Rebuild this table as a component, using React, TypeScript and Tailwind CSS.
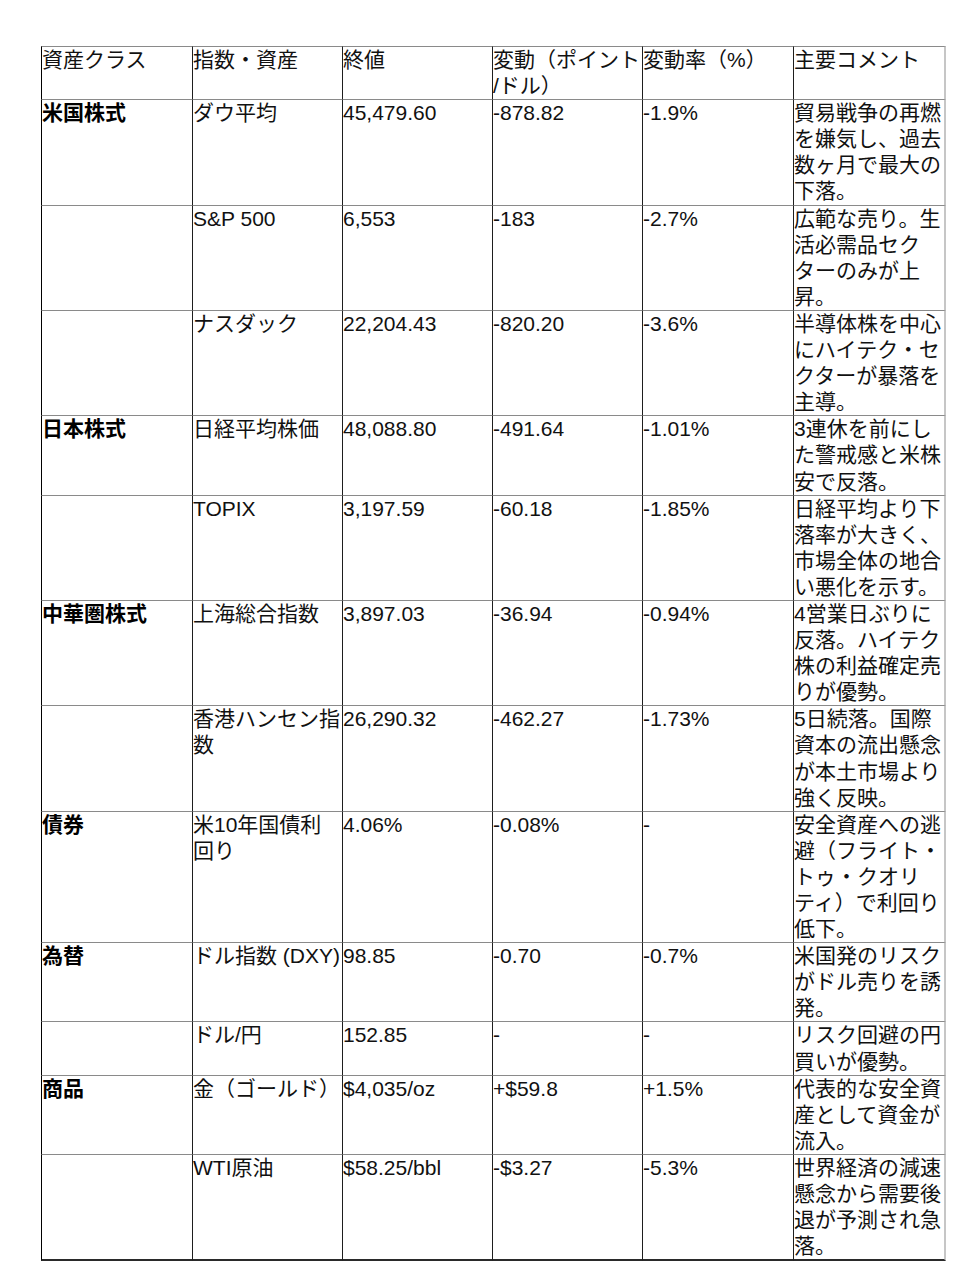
import React from 'react';

type Row = {
    cls: string;
    name: string;
    close: string;
    change: string;
    pct: string;
    note: string;
};

const rows: Row[] = [
    { cls: '米国株式', name: 'ダウ平均', close: '45,479.60', change: '-878.82', pct: '-1.9%', note: '貿易戦争の再燃を嫌気し、過去数ヶ月で最大の下落。' },
    { cls: '', name: 'S&P 500', close: '6,553', change: '-183', pct: '-2.7%', note: '広範な売り。生活必需品セクターのみが上昇。' },
    { cls: '', name: 'ナスダック', close: '22,204.43', change: '-820.20', pct: '-3.6%', note: '半導体株を中心にハイテク・セクターが暴落を主導。' },
    { cls: '日本株式', name: '日経平均株価', close: '48,088.80', change: '-491.64', pct: '-1.01%', note: '3連休を前にした警戒感と米株安で反落。' },
    { cls: '', name: 'TOPIX', close: '3,197.59', change: '-60.18', pct: '-1.85%', note: '日経平均より下落率が大きく、市場全体の地合い悪化を示す。' },
    { cls: '中華圏株式', name: '上海総合指数', close: '3,897.03', change: '-36.94', pct: '-0.94%', note: '4営業日ぶりに反落。ハイテク株の利益確定売りが優勢。' },
    { cls: '', name: '香港ハンセン指数', close: '26,290.32', change: '-462.27', pct: '-1.73%', note: '5日続落。国際資本の流出懸念が本土市場より強く反映。' },
    { cls: '債券', name: '米10年国債利回り', close: '4.06%', change: '-0.08%', pct: '-', note: '安全資産への逃避（フライト・トゥ・クオリティ）で利回り低下。' },
    { cls: '為替', name: 'ドル指数 (DXY)', close: '98.85', change: '-0.70', pct: '-0.7%', note: '米国発のリスクがドル売りを誘発。' },
    { cls: '', name: 'ドル/円', close: '152.85', change: '-', pct: '-', note: 'リスク回避の円買いが優勢。' },
    { cls: '商品', name: '金（ゴールド）', close: '$4,035/oz', change: '+$59.8', pct: '+1.5%', note: '代表的な安全資産として資金が流入。' },
    { cls: '', name: 'WTI原油', close: '$58.25/bbl', change: '-$3.27', pct: '-5.3%', note: '世界経済の減速懸念から需要後退が予測され急落。' },
];

const headers: React.ReactNode[] = [
    '資産クラス',
    '指数・資産',
    '終値',
    <>
        変動（ポイント
        <br />
        /ドル）
    </>,
    '変動率（%）',
    '主要コメント',
];

const cell = 'p-0 align-top text-left border-l border-t border-l-[#1e1e1e] border-t-[#8a8a8a]';
const lastCol = 'border-r-2 border-r-[#c6c6c6]';

export default function App() {
    return (
        <div lang="ja" className="min-h-[1279px] w-[968px] bg-white pl-[41px] pt-[46px]">
            <table
                lang="ja"
                className="table-fixed border-separate border-spacing-0 font-['Liberation_Sans','Noto_Sans_CJK_JP',sans-serif] text-[21px] leading-[26.1px] text-[#111] [line-break:strict]"
                style={{ width: 905 }}
            >
                <colgroup>
                    <col className="w-[151px]" />
                    <col className="w-[150px]" />
                    <col className="w-[150px]" />
                    <col className="w-[150px]" />
                    <col className="w-[151px]" />
                    <col className="w-[153px]" />
                </colgroup>
                <thead>
                    <tr>
                        {headers.map((h, i) => (
                            <th
                                key={i}
                                className={`${cell} font-normal border-t-[#3a3a3a] ${i === 0 ? 'border-l-black' : ''} ${i === 5 ? lastCol : ''}`}
                            >
                                {h}
                            </th>
                        ))}
                    </tr>
                </thead>
                <tbody>
                    {rows.map((r, idx) => {
                        const last = idx === rows.length - 1 ? 'border-b-2 border-b-[#2a2a2a]' : '';
                        return (
                            <tr key={idx}>
                                <td className={`${cell} border-l-black font-bold text-black ${last}`}>{r.cls}</td>
                                <td className={`${cell} ${last}`}>{r.name}</td>
                                <td className={`${cell} ${last}`}>{r.close}</td>
                                <td className={`${cell} ${last}`}>{r.change}</td>
                                <td className={`${cell} ${last}`}>{r.pct}</td>
                                <td className={`${cell} ${lastCol} ${last}`}>{r.note}</td>
                            </tr>
                        );
                    })}
                </tbody>
            </table>
        </div>
    );
}
